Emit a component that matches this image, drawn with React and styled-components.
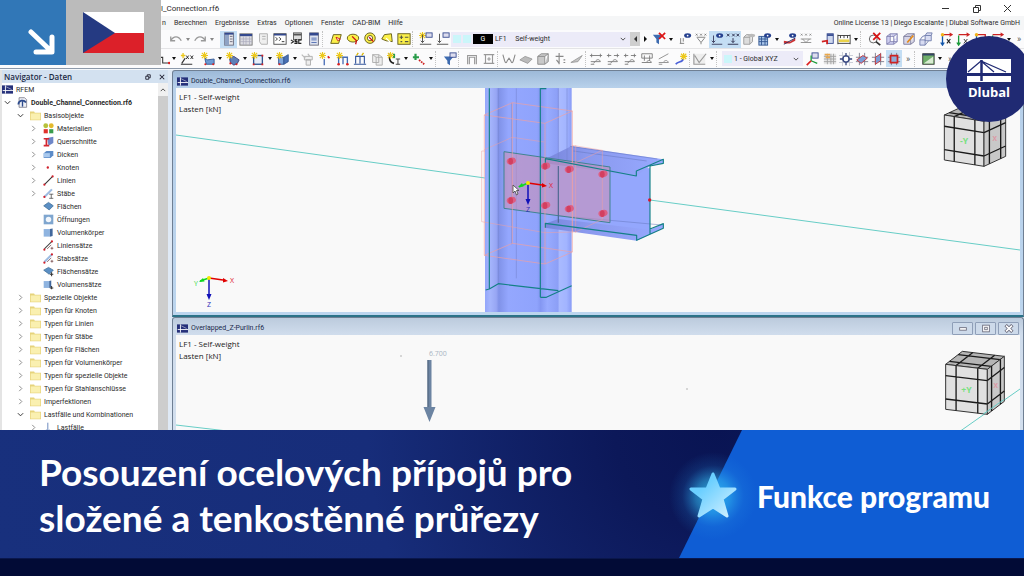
import React from 'react';
import styled, { createGlobalStyle } from 'styled-components';

const GlobalStyle = createGlobalStyle`
  * { box-sizing: border-box; }
  body { margin: 0; background: #020b36; }
  button, select { font: inherit; color: inherit; border: 0; padding: 0; margin: 0; background: none; }
`;

const Page = styled.div`
  position: relative;
  display: flex;
  flex-direction: column;
  height: 100vh;
  overflow: hidden;
  font-family: Roboto, 'Liberation Sans', sans-serif;
  font-size: 7px;
  color: #2b2b2b;
`;
const Program = styled.main`
  flex: 1;
  min-height: 0;
  display: flex;
  flex-direction: column;
  overflow: hidden;
  background: #fff;
`;

/* ---------- title bar and menu ---------- */
const TitleBar = styled.header`
  flex: none;
  display: flex;
  align-items: center;
  justify-content: space-between;
  height: 16px;
  padding: 0 12px 0 161px;
  font-size: 8px;
`;
const WindowButtons = styled.div`
  display: flex;
  gap: 22px;
`;
const WindowButton = styled.button`
  display: flex;
  svg { width: 9px; height: 9px; }
`;
const MenuBar = styled.nav`
  flex: none;
  display: flex;
  align-items: center;
  gap: 8px;
  height: 14px;
  padding: 0 4px 0 162px;
  background: #f5f6f7;
  white-space: nowrap;
`;
const MenuItem = styled.button`
  line-height: 14px;
`;
const License = styled.span`
  margin-left: auto;
`;

/* ---------- toolbars ---------- */
const Toolbar = styled.div`
  flex: none;
  display: flex;
  align-items: center;
  height: ${(p) => p.$height}px;
  padding-left: ${(p) => p.$start}px;
  background: #fbfbfc;
  border-bottom: 1px solid ${(p) => p.$line};
`;
const Tool = styled.button`
  flex: none;
  display: flex;
  align-items: center;
  justify-content: center;
  width: ${(p) => p.$w}px;
  height: 17px;
  background: ${(p) => (p.$on ? '#c4def4' : 'none')};
  svg { width: 14px; height: 14px; }
`;
const Caret = styled.button`
  flex: none;
  display: flex;
  justify-content: center;
  width: 8px;
  &::before {
    content: '';
    border: 2px solid transparent;
    border-top: 3px solid ${(p) => (p.$dim ? '#888' : '#111')};
    border-bottom: 0;
  }
`;
const Gap = styled.span`
  flex: none;
  width: ${(p) => p.$w}px;
  height: 16px;
  border-left: ${(p) => (p.$line ? '1px dotted #c3c3c3' : '0')};
`;
const More = styled.button`
  flex: none;
  width: 12px;
  color: #555;
  font-size: 9px;
`;
const Combo = styled.label`
  flex: none;
  display: flex;
  align-items: center;
  gap: 2px;
  width: ${(p) => p.$w}px;
  height: 15px;
  padding: 0 4px 0 2px;
  background: #ecebf8;
  select { flex: 1; min-width: 0; appearance: none; height: 14px; outline: 0; }
  svg { width: 6px; height: 6px; }
`;
const Swatch = styled.span`
  width: 8px;
  height: 8px;
  background: #cbf6fa;
`;
const CaseTag = styled.span`
  width: 20px;
  height: 10px;
  background: #000;
  color: #fff;
  text-align: center;
  line-height: 10px;
`;
const Step = styled.button`
  flex: none;
  width: 10px;
  height: 14px;
  background: ${(p) => (p.$dim ? '#cfcfcf' : 'none')};
  display: flex;
  align-items: center;
  justify-content: center;
  svg { width: 5px; height: 6px; }
`;

/* ---------- workspace ---------- */
const Workspace = styled.div`
  flex: 1;
  min-height: 0;
  display: flex;
  background: #dfe9f5;
  border-top: 1px solid #f4f8fc;
`;
const Navigator = styled.aside`
  flex: none;
  display: flex;
  flex-direction: column;
  width: 168px;
  margin-right: 4px;
  background: #fff;
  border-left: 2px solid #e4e4e4;
`;
const NavigatorHeader = styled.div`
  flex: none;
  display: flex;
  align-items: center;
  gap: 8px;
  height: 13px;
  padding: 0 3px 0 2px;
  background: #d3e1f0;
  svg { width: 6px; height: 6px; }
`;
const NavigatorTitle = styled.h2`
  flex: 1;
  margin: 0;
  font: 600 8px/12px 'Open Sans', sans-serif;
  color: #1d2b45;
`;
const NavigatorBody = styled.div`
  flex: 1;
  min-height: 0;
  display: flex;
`;
const Tree = styled.ul`
  flex: 1;
  margin: 0;
  padding: 0;
  overflow: hidden;
  list-style: none;
`;
const TreeRow = styled.li`
  display: flex;
  align-items: center;
  height: 13px;
  padding-left: ${(p) => [0, 2, 15, 28][p.$level]}px;
  font-weight: ${(p) => (p.$strong ? 700 : 400)};
  line-height: 8px;
  white-space: nowrap;
`;
const Toggle = styled.span`
  flex: none;
  display: flex;
  width: ${(p) => (p.$none ? 0 : 13)}px;
  svg { width: 7px; height: 7px; }
`;
const TreeIcon = styled.span`
  flex: none;
  display: flex;
  margin-right: 3px;
  svg { width: 11px; height: 11px; }
`;
const ScrollTrack = styled.div`
  width: 10px;
  background: #cdcdcd;
`;
const ScrollUp = styled.button`
  display: flex;
  align-items: center;
  justify-content: center;
  width: 10px;
  height: 13px;
  background: #f0f0f0;
  svg { width: 6px; height: 6px; }
`;

/* ---------- document windows ---------- */
const Documents = styled.section`
  flex: 1;
  min-width: 0;
  display: flex;
  flex-direction: column;
`;
const DocWindow = styled.article`
  flex: none;
  padding: 0 3px 3px;
  border: 1px solid #6f7f93;
  border-bottom: 2px solid #2c7388;
  border-radius: 3px 3px 0 0;
  background: ${(p) => (p.$active ? 'linear-gradient(#9db9d8, #b7d0ea 16px, #bcd5ee)' : 'linear-gradient(#bccbdd, #cfdcec 16px, #d6e2f0)')};
`;
const DocTitle = styled.header`
  display: flex;
  align-items: center;
  justify-content: space-between;
  height: 17px;
  padding: 3px 1px 0;
  color: #1a2a4a;
`;
const DocName = styled.span`
  display: flex;
  align-items: center;
  gap: 3px;
  svg { width: 11px; height: 9px; }
`;
const DocButtons = styled.div`
  display: flex;
  gap: 2px;
`;
const DocButton = styled.button`
  display: flex;
  align-items: center;
  justify-content: center;
  width: 21px;
  height: 13px;
  border: 1px solid #8f9fb8;
  border-radius: 1px;
  background: #cddaea;
  svg { width: 10px; height: 9px; }
`;
const Viewport = styled.div`
  display: grid;
  background: #f9f9f9;
  > * { grid-area: 1 / 1; }
`;
const Scene = styled.svg`
  display: block;
  width: 100%;
  height: 224px;
`;
const LoadCaption = styled.div`
  padding: 3px 3px;
  font: 8px/12px 'Open Sans', sans-serif;
  color: #222;
`;

/* ---------- overlays ---------- */
const LanguageBadge = styled.div`
  position: absolute;
  top: 0;
  left: 0;
  display: flex;
  height: 65px;
`;
const ArrowBox = styled.div`
  width: 66px;
  padding: 29px 11px 10px 28px;
  background: #3177b7;
`;
const FlagBox = styled.div`
  width: 95px;
  padding: 12px 17px;
  background: #bbbbbb;
  svg { display: block; width: 61px; height: 41px; }
`;
const Brand = styled.div`
  position: absolute;
  top: 36px;
  right: -8px;
  display: flex;
  flex-direction: column;
  align-items: center;
  width: 86px;
  height: 86px;
  padding-top: 23px;
  border-radius: 50%;
  background: #202a73;
  color: #fff;
  font: 700 13px/21px 'Open Sans', sans-serif;
  svg { width: 44px; height: 23px; }
`;

/* ---------- banner ---------- */
const Banner = styled.section`
  flex: none;
  display: flex;
  justify-content: space-between;
  height: 128px;
  background: radial-gradient(circle at 70% 0%, #091453 0, #0c1859 14%, #172d7a 48%, #18307d 100%);
  color: #fff;
`;
const Headline = styled.h1`
  margin: 0;
  padding: 19px 0 0 39px;
  font: 700 37px/46px Lato, sans-serif;
  white-space: nowrap;
`;
const Feature = styled.div`
  flex: none;
  position: relative;
  display: flex;
  align-items: center;
  gap: 20px;
  width: 345px;
  padding: 4px 0 0 10px;
  font: 900 30px/32px Lato, sans-serif;
  white-space: nowrap;
  &::before {
    content: '';
    position: absolute;
    inset: 0;
    background: #0f5dd4;
    clip-path: polygon(63px 0, 100% 0, 100% 100%, 0 100%);
  }
  svg { position: relative; flex: none; width: 48px; height: 48px; overflow: visible; }
  span { position: relative; }
`;
const BottomStrip = styled.footer`
  flex: none;
  height: 18px;
  background: #020b36;
  border-top: 1px solid #0a174c;
`;

/* ---------- small drawings ---------- */
const Svg = ({ children, box = '0 0 16 16', ...rest }) => (
  <svg viewBox={box} fill="none" aria-hidden="true" {...rest}>{children}</svg>
);
const Chevron = ({ dir = 'down' }) => (
  <Svg box="0 0 8 8">
    <path d={{ down: 'M1 2.5l3 3 3-3', right: 'M2.5 1l3 3-3 3', up: 'M1 5.5l3-3 3 3' }[dir]} stroke={dir === 'right' ? '#888' : '#333'} strokeWidth="1.1" />
  </Svg>
);

const eye = <g><ellipse cx="11" cy="4" rx="4" ry="2.6" fill="#25408f" /><circle cx="11" cy="4" r="1" fill="#fff" /></g>;
const spark = <path d="M4 0v8M0 4h8M1 1l6 6M7 1L1 7" stroke="#ecc81a" strokeWidth="1.3" />;
const lasso = { fill: '#fbf04a', stroke: '#5d5510' };

const ICONS = {
  undo: <path d="M2 5v5h5M2 10c3-6 9-6 12 0" stroke="#999" strokeWidth="1.5" />,
  redo: <path d="M14 5v5H9M14 10c-3-6-9-6-12 0" stroke="#999" strokeWidth="1.5" />,
  navigator: <><rect x="3" y="1" width="10" height="14" fill="#e6e6ea" stroke="#667" /><rect x="3" y="1" width="5" height="14" fill="#8fa3c4" /><path d="M3 2h10" stroke="#33488e" strokeWidth="2" /><path d="M9 5h3M9 8h3M9 11h3" stroke="#667" /></>,
  table: <><rect x="1" y="2" width="14" height="13" fill="#dcdce2" stroke="#777" /><path d="M1 3.500h14" stroke="#33488e" strokeWidth="2.500" /><path d="M1 8h14M1 11h14M5 5v10M8 5v10M12 5v10" stroke="#aab" strokeWidth=".8" /></>,
  sheet: <><path d="M4 2h9v12H6l-2-3z" fill="#efefef" stroke="#aaa" /><path d="M7 5h4M7 8h4" stroke="#aaa" /></>,
  console: <><rect x="1" y="2" width="14" height="12" fill="#fff" stroke="#444" /><path d="M1 3h14" stroke="#33488e" strokeWidth="2" /><path d="M3 6l2 2-2 2M7 6l2 2-2 2M10 11h3" stroke="#222" /></>,
  script: <><rect x="4" y="1" width="9" height="8" fill="#ddd" stroke="#555" /><path d="M4 3h9" stroke="#555" strokeWidth="2" /><path d="M1 9l3 2-3 2M8 9H6v2h2v2H5M13 9h-3v4h3" stroke="#222" strokeWidth="1.3" /></>,
  panel: <><rect x="3" y="1" width="10" height="14" fill="#dde2ef" stroke="#667" /><path d="M3 2.500h10" stroke="#33488e" strokeWidth="3" /><path d="M5 7h6M5 9h6M5 12h6" stroke="#4b68b0" /></>,
  selRect: <><path d="M5 3h9l-3 10H2z" {...lasso} /><path d="M8 6l5 2-3 2z" fill="#fff" stroke="#c11" /></>,
  selEllipse: <><ellipse cx="8" cy="7" rx="6.500" ry="4.500" {...lasso} /><path d="M7 5l5 5-1 4" stroke="#c11" strokeWidth="1.500" /></>,
  selRing: <><circle cx="8" cy="7" r="6" {...lasso} /><circle cx="8" cy="7" r="3" fill="#fff" stroke="#5d5510" /><path d="M7 6l5 5" stroke="#c11" strokeWidth="1.500" /></>,
  selPoly: <><path d="M2 8l3-5 8-1 1 9-7-1z" {...lasso} /><path d="M7 7l5 5-2 2" stroke="#fff" strokeWidth="1.500" /></>,
  selSpecial: <><rect x="1" y="2" width="14" height="12" {...lasso} /><path d="M3 6h4M5 4v4M9 6h4M4 11h2M9 11h4" stroke="#554" strokeWidth="1.300" /></>,
  loadNew: <>{spark}<rect x="8" y="1" width="7" height="5" fill="#dde" stroke="#33488e" /><path d="M4 3v9M2 10l2 2 2-2M1 14h13" stroke="#444" /></>,
  loadCase: <><rect x="8" y="1" width="7" height="5" fill="#dde" stroke="#33488e" /><path d="M4 2v10M2 10l2 2 2-2M1 14h13" stroke="#444" /></>,
  filterX: <><path d="M1 3h11L8 8v6l-3-2V8z" fill="#3d6bb0" /><path d="M8 1l7 7M15 1L8 8" stroke="#e01515" strokeWidth="2" /></>,
  filter: <><path d="M1 5h11L8 10v5l-3-2v-3z" fill="#3d6bb0" /><rect x="8" y="1" width="7" height="5" fill="#dde" stroke="#33488e" /></>,
  eyeSupport: <>{eye}<path d="M3 7v6M6 7v4M2 13h5" stroke="#777" /></>,
  values: <path d="M2 2l2 2M4 2L2 4M7 2l2 2M9 2L7 4M12 2l2 2M14 2l-2 2M3 6h10M4 7l4 5 4-5M8 12v2" stroke="#777" />,
  eyeLoad: <>{eye}<path d="M4 4v8M2 10l2 2 2-2M2 14h12" stroke="#335" /></>,
  xxx: <path d="M1 2l3 3M4 2L1 5M7 2l3 3M10 2L7 5M12 2l3 3M15 2l-3 3M8 7v5M6 10l2 2 2-2M2 14h12" stroke="#224" />,
  grayCube: <><path d="M2 6h7v8H2zM2 6l3-3h7l-3 3M12 3v8l-3 3" fill="#ddd" stroke="#999" /><ellipse cx="11" cy="4" rx="4" ry="2" fill="#bbb" /></>,
  eyeGrid: <><rect x="1" y="5" width="10" height="10" fill="#a8c4e8" stroke="#315590" /><path d="M1 8h10M1 11h10M4 5v10M8 5v10" stroke="#315590" />{eye}</>,
  eyeResult: <>{eye}<path d="M1 13v-3l7 1 6-4v3l-6 3z" fill="#c33" /><path d="M1 14L14 7" stroke="#225" /></>,
  grayXxx: <path d="M2 2l2 2M4 2L2 4M7 2l2 2M9 2L7 4M12 2l2 2M14 2l-2 2M2 8h12M2 12h12M4 8l4 4 4-4" stroke="#888" />,
  resultPanel: <><rect x="7" y="2" width="7" height="11" fill="#cfd8ee" stroke="#33488e" /><path d="M7 3.500h7" stroke="#33488e" strokeWidth="2" /><path d="M1 11l6-1v4" stroke="#d02020" strokeWidth="2" /></>,
  scale: <><path d="M1 4h14M1 13h14M1 3v11M15 3v11M4 4v3M8 4v3M12 4v3" stroke="#333" /><path d="M2 10h12" stroke="#ead24a" strokeWidth="3" /></>,
  zoomX: <><circle cx="6" cy="8" r="4.500" stroke="#555" /><path d="M9 11l5 4" stroke="#333" strokeWidth="2" /><path d="M6 1l8 8M14 1L6 9" stroke="#d81515" strokeWidth="2" /></>,
  cube: <path d="M2 5h8v9H2zM2 5l4-3h8l-4 3M14 2v9l-4 3M6 2v9h8M6 11l-4 3" fill="#cfcff0" stroke="#7676a8" strokeWidth=".9" />,
  cubeEdit: <><path d="M2 5h8v9H2zM2 5l4-3h8l-4 3M14 2v9l-4 3" fill="#d8d6e8" stroke="#777798" /><path d="M6 12l7-8" stroke="#e28a1c" strokeWidth="2" /></>,
  cubes: <path d="M1 9h6v6H1zM7 4h7v6H7zM1 9l3-4 3-1M14 4l1-3H9L7 4M7 15l4-5" fill="#d8dcf2" stroke="#6f7bab" />,
  axisX: <><path d="M4 3h10M12 1l3 2-3 2" stroke="#c22" strokeWidth="1.300" /><path d="M4 4v10M2 12l2 3 2-3" stroke="#15a" strokeWidth="1.500" /><circle cx="4" cy="3" r="2" fill="#f2b31a" /><path d="M9 8l4 5M13 8l-4 5" stroke="#222" strokeWidth="1.300" /></>,
  axisY: <><path d="M3 3h11M12 1l3 2-3 2" stroke="#c22" strokeWidth="1.300" /><path d="M3 4v10M1 12l2 3 2-3" stroke="#1a9a3a" strokeWidth="1.500" /><path d="M9 8l4 5M13 8l-4 5" stroke="#222" /></>,
  axisZ: <><path d="M3 3h11v5" stroke="#c22" strokeWidth="1.500" /><path d="M4 4v10" stroke="#15a" strokeWidth="1.500" /><circle cx="4" cy="3" r="2" fill="#f2b31a" /></>,
  line: <><path d="M1 6h6v7h8" stroke="#333" strokeWidth="1.300" /><circle cx="15" cy="13" r="1.500" fill="#d22" /></>,
  memberXx: <><path d="M1 14h13M2 13l4-6" stroke="#333" strokeWidth="1.300" /><path d="M7 4l3 4M10 4L7 8M12 4l3 4M15 4l-3 4" stroke="#222" /><path d="M1 4h5M3.500 1v6" stroke="#ecc81a" strokeWidth="1.500" /></>,
  surface: <><path d="M4 6l3 3 8-1v6H6z" fill="#6d9bd4" stroke="#315590" />{spark}<circle cx="5" cy="14" r="1.200" fill="#d22" /><circle cx="14" cy="14" r="1.200" fill="#d22" /></>,
  solid: <><path d="M4 7l5-2 6 4-2 4-4 2-4-3z" fill="#5f7fb8" stroke="#3a3f77" />{spark}<circle cx="5" cy="13" r="1.200" fill="#d22" /><circle cx="12" cy="14" r="1.200" fill="#d22" /></>,
  opening: <><rect x="3" y="4" width="10" height="10" fill="#e8effa" stroke="#315590" strokeWidth="1.500" />{spark}<path d="M2 13h2v2H2zM12 13h2v2h-2zM12 3h2v2h-2z" fill="#d22" /></>,
  volume: <><path d="M3 6h6v8H3z" fill="#7fa6dc" stroke="#315590" /><path d="M9 6l5-3v8l-5 3z" fill="#4a71b4" stroke="#315590" />{spark}<circle cx="4" cy="14" r="1.200" fill="#d22" /></>,
  gray: <><path d="M5 5h9v4H5zM7 9h5v6H7z" fill="#eee" stroke="#aaa" /><path d="M2 3l4 4M9 2l2 3" stroke="#bbb" strokeWidth="1.500" /></>,
  node: <>{spark}<path d="M6 8v7" stroke="#456bb5" strokeWidth="1.500" /><path d="M10 5l2 2" stroke="#d22" strokeWidth="2" /></>,
  frame: <><path d="M3 14V6h10v8M8 6v8" stroke="#456bb5" strokeWidth="1.500" />{spark}<circle cx="3" cy="14" r="1.500" fill="#d22" /><circle cx="13" cy="14" r="1.500" fill="#d22" /></>,
  frame2: <><path d="M3 13V5h10v8M8 5v8M1 14h14" stroke="#35579c" strokeWidth="1.300" /><path d="M4 4l2-3M10 4l2-3" stroke="#d8b400" strokeWidth="1.500" /></>,
  grayFrame: <path d="M3 3h7v9H3zM7 6h7v9H7zM3 3l4 3M10 3l4 3" fill="#eee" stroke="#aaa" />,
  supports: <><path d="M3 2v5c0 3 2 5 5 6" stroke="#222" strokeWidth="2" /><path d="M8 2v5" stroke="#2a9c4a" strokeWidth="2.500" /><path d="M10 8h5M12.500 8v6M10 14h5" stroke="#333" />{spark}</>,
  hinge: <><path d="M4 2v7M1 6h7" stroke="#2a9c4a" strokeWidth="2.500" /><path d="M8 9l6 5" stroke="#c22" strokeWidth="2" strokeDasharray="2 1" /></>,
  arch: <path d="M3 14V4h10v10M5 14V6h6v8" stroke="#999" strokeWidth="1.300" />,
  beam: <path d="M2 3h12M2 13h12M4 3v10M12 3v10M6 8h4M8 6v4" stroke="#999" strokeWidth="1.300" />,
  moment: <path d="M1 3l2 7c1 3 2 3 3 0l2-3 2 3c1 3 2 3 3 0l2-7" stroke="#888" strokeWidth="1.200" />,
  slab: <path d="M1 9l6-4 8 3-5 5z" fill="#bbb" stroke="#999" />,
  box: <path d="M2 5h8v9H2zM2 5l4-3h8l-4 3M14 2v9l-4 3" fill="#c9c9c9" stroke="#888" />,
  react: <path d="M7 1v13M3 5h9M4 9l3 4M12 9h2M12 12h2" stroke="#888" strokeWidth="1.300" />,
  wedge: <path d="M1 12L14 4 9 11z" fill="#c5c5c5" stroke="#999" />,
  dim: <path d="M1 4h14M3 2v4M13 2v4M2 11h5c2-3 5-3 6 0H7l-2 2M2 14h4" stroke="#777" />,
  dim2: <path d="M1 4h5M9 4h6M3 2v4M13 2v4M2 11h5c2-3 5-3 6 0H7l-2 2M2 14h4" stroke="#777" />,
  dimBox: <path d="M2 2h12v5H2zM5 4v6M11 4v6M2 12h5c2-3 5-3 6 0H7" stroke="#777" />,
  dimTilt: <path d="M2 8L13 2M2 12h5c2-3 5-3 6 0H7M2 14h4" stroke="#888" />,
  wand: <><path d="M2 14c3-4 6-1 9-6" stroke="#4a60d8" strokeWidth="2" /><path d="M11 1v8M7 5h8M8 2l6 6M14 2L8 8" stroke="#ecc81a" strokeWidth="1.300" /></>,
  grayChart: <><rect x="1" y="2" width="13" height="12" fill="#eee" /><path d="M1 2v12h13M2 4l5 8 8-10" stroke="#999" strokeWidth="1.300" /></>,
  csys: <><rect x="8" y="1" width="7" height="6" fill="#dde" stroke="#33488e" /><path d="M7 10V4M7 10l7 3" stroke="#1c9c3a" strokeWidth="1.500" /><path d="M7 10l-5 5" stroke="#d22" strokeWidth="2" /></>,
  gridPlane: <><rect x="1" y="2" width="14" height="12" fill="#e6e6e6" /><path d="M1 5h14M1 8h14M1 11h14M5 2v12M9 2v12M12 2v12" stroke="#a2a2a2" /><path d="M2 3h6M3 6h5" stroke="#eba84a" strokeWidth="2" /></>,
  snap: <><path d="M0 4h16M0 12h16M4 0v16M12 0v16" stroke="#c5c8d2" /><circle cx="8" cy="8" r="3.500" fill="#fff" stroke="#35457f" strokeWidth="1.500" /><path d="M8 1v4M8 11v4M1 8h4M11 8h4" stroke="#35457f" strokeWidth="1.500" /></>,
  planeA: <><path d="M1 6h14M1 11h14M5 1v14M11 1v14" stroke="#778" /><path d="M2 9l7-5 5 3-7 6z" fill="#7a9cd6" stroke="#c33" /></>,
  planeB: <><path d="M1 6h14M1 11h14M5 1v14M11 1v14" stroke="#778" /><path d="M5 6l6-4v8l-6 4z" fill="#7a9cd6" stroke="#c33" /></>,
  planeC: <><path d="M1 6h14M1 11h14M5 1v14M11 1v14" stroke="#778" /><path d="M4 4h8v8H4z" fill="#8facd8" stroke="#c22" strokeWidth="2" /></>,
  map: <><rect x="2" y="2" width="13" height="12" fill="#6fae6a" stroke="#333" /><path d="M3 13L14 5v8z" fill="#d9ecd2" /><path d="M2 3h13" stroke="#346" strokeWidth="2" /></>,
};

const TREE_ICONS = {
  rfem: <><rect y="2" width="16" height="12" fill="#25307a" /><path d="M1 9.500h15M5 2v12" stroke="#fff" strokeWidth="1.300" /><path d="M6 4l8 4" stroke="#fff" strokeWidth=".7" /></>,
  file: <><path d="M3 1h8l3 3v11H3z" fill="#eef1f6" stroke="#667" /><path d="M2 11c0-6 8-8 11-3" stroke="#2c4a8c" strokeWidth="2.500" /><path d="M8 6v8" stroke="#2c4a8c" strokeWidth="2" /></>,
  folder: <><path d="M0 2h6l1 2h9v11H0z" fill="#e6d37c" /><path d="M1 5h14v9H1z" fill="#faf0b0" /></>,
  material: <><circle cx="4" cy="4" r="3.500" fill="#b6c13a" /><circle cx="12" cy="4" r="3.500" fill="#e3b92c" /><rect x="1" y="9" width="6" height="6" fill="#e0322c" /><rect x="9" y="9" width="6" height="6" fill="#3a9c4c" /></>,
  section: <><path d="M6 3l9-2v9l-7 4z" fill="#6e86c8" /><path d="M1 4h8M5 4v9M1 14h8" stroke="#d32630" strokeWidth="2.500" /></>,
  thickness: <><path d="M1 6l4-3h10v6l-4 4H1z" fill="#5d8cc8" /><path d="M1 6h9v6H1z" fill="#a9c9ee" /></>,
  node: <circle cx="7" cy="8" r="1.700" fill="#d0202c" />,
  line: <><path d="M2 14L14 2" stroke="#333" strokeWidth="1.500" /><circle cx="2" cy="14" r="1.600" fill="#d0202c" /><circle cx="14" cy="2" r="1.600" fill="#d0202c" /></>,
  member: <><path d="M2 13L13 2" stroke="#9dbbe2" strokeWidth="3" /><circle cx="2" cy="13" r="1.600" fill="#d0202c" /><path d="M9 9h6M12 9v6M9 15h6" stroke="#333" /></>,
  surface: <path d="M1 7l7-5 7 5-6 6z" fill="#5b8fc4" stroke="#386892" />,
  opening: <><rect x="1" y="1" width="14" height="14" fill="#7fa6cf" /><circle cx="8" cy="8" r="4" fill="#f1f6fc" /></>,
  solid: <><path d="M1 3h9v11H1z" fill="#8fb4e0" /><path d="M10 3l4-1v11l-4 1z" fill="#41679c" /></>,
  lineSet: <><path d="M2 13L13 2" stroke="#444" strokeWidth="1.500" /><circle cx="2" cy="14" r="1.600" fill="#d0202c" /><circle cx="13" cy="2" r="1.600" fill="#d0202c" /><path d="M6 13l6-6M11 12h4M13 10v4" stroke="#633" /></>,
  memberSet: <><path d="M2 13L13 2" stroke="#9dbbe2" strokeWidth="3" /><circle cx="2" cy="14" r="1.600" fill="#d0202c" /><circle cx="13" cy="2" r="1.600" fill="#d0202c" /><path d="M6 13l6-6M11 12h4M13 10v4" stroke="#633" /></>,
  surfaceSet: <><path d="M1 6l7-4 7 4-6 6z" fill="#5b8fc4" stroke="#386892" /><path d="M10 12h5M12.500 9v6" stroke="#333" strokeWidth="1.500" /></>,
  solidSet: <><path d="M1 3h8v10H1z" fill="#8fb4e0" /><path d="M9 3l3-1v10l-3 1z" fill="#41679c" /><path d="M10 13h5M12.500 10v5" stroke="#333" strokeWidth="1.500" /></>,
  load: <path d="M7 1v13M5 11l2 3 2-3" stroke="#5c7db8" strokeWidth="1.300" />,
};

/* Each entry: [icon, width, highlighted]; 'v' is a drop-down arrow, '|' a divider, '_' a space. */
const ROW_ONE_LEFT = [['undo', 16], ['v', 1], ['redo', 16], ['v', 1], ['_', 4], ['navigator', 17, true], ['table', 17], ['sheet', 17], ['console', 17], ['script', 17], ['panel', 17], ['|', 5], ['selRect', 17], ['selEllipse', 17], ['selRing', 17], ['selPoly', 17], ['selSpecial', 17], ['|', 5], ['loadNew', 17], ['loadCase', 17]];
const ROW_ONE_RIGHT = [['filterX', 17], ['v'], ['_', 2], ['eyeSupport', 16], ['values', 16], ['eyeLoad', 16, true], ['xxx', 16, true], ['grayCube', 16], ['eyeGrid', 16], ['v'], ['_', 1], ['eyeResult', 16], ['grayXxx', 16], ['_', 6], ['resultPanel', 16], ['scale', 16], ['v'], ['|', 6], ['zoomX', 17], ['cube', 17], ['cubeEdit', 17], ['cubes', 17], ['_', 3], ['axisX', 17], ['axisY', 17], ['axisZ', 17], ['axisY', 17], ['v']];
const ROW_TWO_LEFT = [['line', 13], ['v'], ['memberXx', 17], ['_', 4], ['surface', 17], ['v'], ['solid', 17], ['v'], ['opening', 17], ['v'], ['volume', 17], ['v'], ['gray', 16], ['_', 2], ['node', 17], ['frame', 17], ['frame2', 17], ['grayFrame', 17], ['supports', 17], ['v'], ['hinge', 17], ['v'], ['|', 6], ['filter', 17], ['|', 5], ['arch', 17], ['beam', 17], ['|', 3], ['moment', 17], ['slab', 17], ['box', 17], ['react', 17], ['wedge', 17], ['|', 2], ['dim', 17], ['dim2', 17], ['dim2', 17], ['dimBox', 17], ['dimTilt', 17], ['wand', 17], ['|', 2], ['grayChart', 17], ['v'], ['|', 6]];
const ROW_TWO_RIGHT = [['csys', 17], ['_', 2], ['gridPlane', 16], ['snap', 16], ['planeA', 16], ['planeB', 16], ['planeC', 16, true]];

const Tools = ({ items }) => items.map(([name, w, on], i) => {
  if (name === 'v') return <Caret key={i} $dim={w === 1} aria-label="Mehr" />;
  if (name === '|' || name === '_') return <Gap key={i} $w={w} $line={name === '|'} />;
  return <Tool key={i} $w={w} $on={on} aria-label={name}><Svg>{ICONS[name]}</Svg></Tool>;
});

const TREE = [
  [0, '', 'rfem', 'RFEM'],
  [1, 'down', 'file', 'Double_Channel_Connection.rf6'],
  [2, 'down', 'folder', 'Basisobjekte'],
  [3, 'right', 'material', 'Materialien'],
  [3, 'right', 'section', 'Querschnitte'],
  [3, 'right', 'thickness', 'Dicken'],
  [3, 'right', 'node', 'Knoten'],
  [3, 'right', 'line', 'Linien'],
  [3, 'right', 'member', 'Stäbe'],
  [3, 'none', 'surface', 'Flächen'],
  [3, 'none', 'opening', 'Öffnungen'],
  [3, 'none', 'solid', 'Volumenkörper'],
  [3, 'none', 'lineSet', 'Liniensätze'],
  [3, 'none', 'memberSet', 'Stabsätze'],
  [3, 'none', 'surfaceSet', 'Flächensätze'],
  [3, 'none', 'solidSet', 'Volumensätze'],
  [2, 'right', 'folder', 'Spezielle Objekte'],
  [2, 'right', 'folder', 'Typen für Knoten'],
  [2, 'right', 'folder', 'Typen für Linien'],
  [2, 'right', 'folder', 'Typen für Stäbe'],
  [2, 'right', 'folder', 'Typen für Flächen'],
  [2, 'right', 'folder', 'Typen für Volumenkörper'],
  [2, 'right', 'folder', 'Typen für spezielle Objekte'],
  [2, 'right', 'folder', 'Typen für Stahlanschlüsse'],
  [2, 'right', 'folder', 'Imperfektionen'],
  [2, 'down', 'folder', 'Lastfälle und Kombinationen'],
  [3, 'right', 'load', 'Lastfälle'],
];

/* Orientation cube: front, side and top faces, each split at 1/4 and 3/4. */
const mix = (a, b, t) => [a[0] + (b[0] - a[0]) * t, a[1] + (b[1] - a[1]) * t];
function Face({ pts, fill }) {
  const [a, b, c, d] = pts;
  return (
    <g>
      <polygon points={pts.join(' ')} fill={fill} stroke="#333" strokeWidth="3" />
      {[0.25, 0.77].map((t) => (
        <path key={t} d={`M${mix(a, b, t)}L${mix(d, c, t)}M${mix(a, d, t)}L${mix(b, c, t)}`} stroke="#1a1a1a" strokeWidth="4" />
      ))}
    </g>
  );
}
function Cube({ fl, fr, br, bl, h, label }) {
  const down = ([x, y]) => [x, y + h];
  const cx = (fl[0] + fr[0]) / 2;
  const cy = (fl[1] + fr[1]) / 2 + h / 2;
  return (
    <g fontFamily="Open Sans" fontWeight="700">
      <Face pts={[bl, br, fr, fl]} fill="#b5b5b5" />
      <Face pts={[fl, fr, down(fr), down(fl)]} fill="#e0e0e0" />
      <Face pts={[fr, br, down(br), down(fr)]} fill="#c8c8c8" />
      <text x={cx} y={cy + 10} fontSize="26" textAnchor="middle" fill="#79e080">{label}</text>
      <text x={(fr[0] + br[0]) / 2} y={(fr[1] + br[1]) / 2 + h / 2 + 8} fontSize="20" textAnchor="middle" fill="#dd98a4">X</text>
    </g>
  );
}

function Axes({ x, y, yTip, yLabel }) {
  return (
    <g transform={`translate(${x} ${y})`} fontFamily="Open Sans" fontSize="7">
      <path d="M0 0L14 2" stroke="#e00000" strokeWidth="1.500" />
      <path d="M14 0l5 3-5 1.500z" fill="#e00000" />
      <path d="M0 0v17" stroke="#1010b8" strokeWidth="1.500" />
      <path d="M-2.500 16h5L0 22z" fill="#1010b8" />
      <path d={`M0 0L${yTip}`} stroke="#10d820" strokeWidth="1.500" />
      <path d="M-10 4l4-4 1.500 3.500z" fill="#10d820" />
      <circle r="2" fill="#f4e800" />
      <text x="21" y="5" fill="#e02030">X</text>
      <text x="-2" y="29" fill="#3030b8">Z</text>
      {yLabel && <text x="-15" y="8" fill="#30d840">Y</text>}
    </g>
  );
}

const BOLTS = [[124, 240], [227, 255], [298, 265], [399, 279], [124, 358], [227, 373], [298, 383], [399, 397]];

function Connection() {
  return (
    <g transform="translate(470 80) scale(.33333)" strokeLinejoin="round">
      <defs>
        <linearGradient id="column" x1="45" x2="305" y1="0" y2="0" gradientUnits="userSpaceOnUse">
          <stop offset="0" stopColor="#93a6fb" />
          <stop offset=".06" stopColor="#a5b5fc" />
          <stop offset=".13" stopColor="#97a6f4" />
          <stop offset=".16" stopColor="#8092e8" />
          <stop offset=".27" stopColor="#94a7fe" />
          <stop offset=".6" stopColor="#8fa3fc" />
          <stop offset=".64" stopColor="#8497f2" />
          <stop offset=".72" stopColor="#98abff" />
          <stop offset=".84" stopColor="#8c9ff6" />
          <stop offset=".86" stopColor="#a9baff" />
          <stop offset=".94" stopColor="#a2b4ff" />
          <stop offset="1" stopColor="#899cf6" />
        </linearGradient>
        <linearGradient id="flange" x1="0" x2="1" y1="0" y2="0">
          <stop offset="0" stopColor="#7886dc" />
          <stop offset=".35" stopColor="#8a99ee" />
          <stop offset="1" stopColor="#97a9ff" />
        </linearGradient>
      </defs>
      <path d="M45 21h260v672H45z" fill="url(#column)" />
      <path d="M265 240L540 262v198l-275-35z" fill="#94a7fd" />
      <path d="M225 235L305 195 580 235v12l-40 8-40 30-275-38z" fill="url(#flange)" />
      <path d="M225 428l40-14 275 32 40-18v14l-80 37-275-39z" fill="url(#flange)" />
      <path d="M85 22v586M125 65v425M139 22v570M265 22v230M291 22v220" stroke="#7180c8" strokeWidth="1.500" />
      <path d="M300 196l262 38M310 210l220 30M265 404l310 28" stroke="#6475bd" strokeWidth="1.500" />
      <path d="M102 212L420 258v167L102 382z" fill="#d08fb0" fillOpacity=".55" stroke="#3f8490" strokeWidth="3" />
      <g stroke="#f0a0a0" strokeWidth="2">
        <path d="M43 102L127 65l180 25-82 37zM43 523l84-36 180 26-82 36zM43 102v421M307 90v423M225 127v422M127 65v422" />
        <path d="M35 210v212l190 33 92-2 80-38V208l-90-15v260M317 193v262M43 206l84-37 95 14M35 210h10M317 245l80-37" strokeOpacity=".75" />
      </g>
      <g stroke="#148087" strokeWidth="3.500">
        <path d="M58 22v602M211 22v627M211 23h18M47 627l11-3 27-16 180 21M211 649h18l76-35" />
        <path d="M265 255v170" stroke="#4c6890" />
        <path d="M226 248v-15l273 52v-15l81-35v12l-40 8v204M226 440v-13l274 36v15l80-36v-14l-40 16" />
      </g>
      {BOLTS.map(([x, y]) => (
        <g key={`${x}-${y}`}>
          <ellipse cx={x} cy={y} rx="14" ry="10" fill="#dc5f84" transform={`rotate(-15 ${x} ${y})`} />
          <ellipse cx={x - 2} cy={y + 1} rx="7" ry="10" fill="#d23f60" />
        </g>
      ))}
      <circle cx="539" cy="357" r="5" fill="#d8142a" />
    </g>
  );
}

function ConnectionScene() {
  return (
    <Scene viewBox="176 87 844 224" fill="none" role="img" aria-label="Double_Channel_Connection">
      <path d="M176 134L485 177M650 199l370 50" stroke="#67cdc6" />
      <Connection />
      <Axes x="528" y="182" yTip="-9 4" />
      <Axes x="209" y="277" yTip="-9 3" yLabel />
      <path d="M513 184v8l2-2 1.500 4 1.500-1-1.500-3.500h2.500z" fill="#fff" stroke="#444" strokeWidth=".8" />
      <g transform="translate(680 100) scale(.33333)">
        <Cube fl={[793, 42]} fr={[912, 61]} br={[977, 31]} bl={[858, 12]} h={135} label="-Y" />
      </g>
    </Scene>
  );
}

function PurlinScene() {
  return (
    <Scene viewBox="176 333 844 224" fill="none" role="img" aria-label="Overlapped_Z-Purlin">
      <path d="M176 423l60 7 60 8M959 430l61-43" stroke="#67cdc6" />
      <path d="M427.500 358h4v47h4l-6 15-6-15h4z" fill="#6c84a2" />
      <path d="M428 358v47" stroke="#4c6078" />
      <text x="429" y="354" fontSize="7" fontFamily="Open Sans" fill="#a8b4c2">6.700</text>
      <circle cx="401" cy="354" r=".7" fill="#999" />
      <circle cx="687" cy="387" r=".7" fill="#999" />
      <g transform="translate(680 310) scale(.33333)">
        <Cube fl={[797, 157]} fr={[922, 172]} br={[973, 133]} bl={[847, 118]} h={135} label="+Y" />
        <path d="M910 306l63-44" stroke="#67cdc6" strokeWidth="3" />
      </g>
    </Scene>
  );
}

const Document = ({ name, active, controls, children }) => (
  <DocWindow $active={active}>
    <DocTitle>
      <DocName><Svg box="0 2 16 12">{TREE_ICONS.rfem}</Svg>{name}</DocName>
      {controls && (
        <DocButtons>
          <DocButton aria-label="Minimieren"><Svg box="0 0 12 10"><rect x="2" y="4" width="8" height="3" fill="#fff" stroke="#667" /></Svg></DocButton>
          <DocButton aria-label="Maximieren"><Svg box="0 0 12 10"><rect x="2" y="1" width="8" height="8" fill="#fff" stroke="#667" /><rect x="4.500" y="3.500" width="3" height="3" stroke="#667" /></Svg></DocButton>
          <DocButton aria-label="Schließen"><Svg box="0 0 12 10"><path d="M2 1l8 8M10 1L2 9" stroke="#667" strokeWidth="4" /><path d="M2.500 1.500l7 7M9.500 1.500l-7 7" stroke="#fff" strokeWidth="2" /></Svg></DocButton>
        </DocButtons>
      )}
    </DocTitle>
    <Viewport>
      {children}
      <LoadCaption>LF1 - Self-weight<br />Lasten [kN]</LoadCaption>
    </Viewport>
  </DocWindow>
);

const MENU = ['n', 'Berechnen', 'Ergebnisse', 'Extras', 'Optionen', 'Fenster', 'CAD-BIM', 'Hilfe'];

export default function App() {
  return (
    <Page>
      <GlobalStyle />
      <Program>
        <TitleBar>
          <span>l_Connection.rf6</span>
          <WindowButtons>
            <WindowButton aria-label="Minimieren"><Svg box="0 0 9 9"><path d="M1 4.500h7" stroke="#333" /></Svg></WindowButton>
            <WindowButton aria-label="Wiederherstellen"><Svg box="0 0 9 9"><path d="M1.500 3.500h5v5h-5zM3.500 3.500v-2h5v5h-2" stroke="#333" /></Svg></WindowButton>
            <WindowButton aria-label="Schließen"><Svg box="0 0 9 9"><path d="M1 1l7 7M8 1L1 8" stroke="#333" /></Svg></WindowButton>
          </WindowButtons>
        </TitleBar>
        <MenuBar>
          {MENU.map((m) => <MenuItem key={m}>{m}</MenuItem>)}
          <License>Online License 13 | Diego Escalante | Dlubal Software GmbH</License>
        </MenuBar>
        <Toolbar $height={19} $start={168} $line="#e4e4e6">
          <Tools items={ROW_ONE_LEFT} />
          <Combo $w={179}>
            <Swatch /><Swatch /><CaseTag>G</CaseTag>
            <select aria-label="Lastfall"><option>{'LF1\u00a0\u00a0\u00a0\u00a0\u00a0Self-weight'}</option></select>
            <Chevron />
          </Combo>
          <Step $dim aria-label="Zurück"><Svg box="0 0 5 6"><path d="M4 0v6L1 3z" fill="#333" /></Svg></Step>
          <Step aria-label="Weiter"><Svg box="0 0 5 6"><path d="M1 0v6l3-3z" fill="#111" /></Svg></Step>
          <Tools items={ROW_ONE_RIGHT} />
          <More aria-label="Mehr">»</More>
        </Toolbar>
        <Toolbar $height={20} $start={157} $line="#8c99aa">
          <Tools items={ROW_TWO_LEFT} />
          <Combo $w={81}>
            <Swatch />
            <select aria-label="Koordinatensystem"><option>1 - Global XYZ</option></select>
            <Chevron />
          </Combo>
          <Tools items={ROW_TWO_RIGHT} />
          <More aria-label="Mehr">»</More>
          <Tools items={[['|', 5], ['map', 17], ['v']]} />
          <More aria-label="Mehr">»</More>
        </Toolbar>

        <Workspace>
          <Navigator>
            <NavigatorHeader>
              <NavigatorTitle>Navigator - Daten</NavigatorTitle>
              <Svg box="0 0 8 8"><path d="M1 3h4v4H1zM3 3V1h4v4H5" stroke="#223" strokeWidth="1.200" /></Svg>
              <Svg box="0 0 8 8"><path d="M1 1l6 6M7 1L1 7" stroke="#223" strokeWidth="1.400" /></Svg>
            </NavigatorHeader>
            <NavigatorBody>
              <Tree>
                {TREE.map(([level, toggle, icon, text]) => (
                  <TreeRow key={text} $level={level} $strong={icon === 'file'}>
                    <Toggle $none={!toggle}>{(toggle === 'down' || toggle === 'right') && <Chevron dir={toggle} />}</Toggle>
                    <TreeIcon><Svg>{TREE_ICONS[icon]}</Svg></TreeIcon>
                    {text}
                  </TreeRow>
                ))}
              </Tree>
              <ScrollTrack><ScrollUp aria-label="Nach oben"><Chevron dir="up" /></ScrollUp></ScrollTrack>
            </NavigatorBody>
          </Navigator>
          <Documents>
            <Document name="Double_Channel_Connection.rf6" active><ConnectionScene /></Document>
            <Document name="Overlapped_Z-Purlin.rf6" controls><PurlinScene /></Document>
          </Documents>
        </Workspace>
      </Program>

      <Banner>
        <Headline>Posouzení ocelových přípojů pro<br />složené a tenkostěnné průřezy</Headline>
        <Feature>
          <svg viewBox="0 0 48 48" aria-hidden="true">
            <defs>
              <radialGradient id="glow">
                <stop offset="0" stopColor="#35c4f5" stopOpacity=".9" />
                <stop offset=".4" stopColor="#30b5f0" stopOpacity=".55" />
                <stop offset=".7" stopColor="#2898e8" stopOpacity=".15" />
                <stop offset="1" stopColor="#2090e8" stopOpacity="0" />
              </radialGradient>
              <linearGradient id="star" x1="0" y1="0" x2="1" y2="1">
                <stop offset=".3" stopColor="#6bcfff" />
                <stop offset="1" stopColor="#d6f1ff" />
              </linearGradient>
            </defs>
            <circle cx="24" cy="24" r="44" fill="url(#glow)" />
            <path d="M24 2l6 15h16L33 27l5 17-14-9-14 9 5-17L2 17h16z" fill="url(#star)" stroke="url(#star)" strokeWidth="3" strokeLinejoin="round" />
          </svg>
          <span>Funkce programu</span>
        </Feature>
      </Banner>
      <BottomStrip />

      <LanguageBadge>
        <ArrowBox>
          <svg width="27" height="26" viewBox="0 0 27 26" fill="none" stroke="#fff" strokeWidth="5" strokeLinecap="round" strokeLinejoin="round" aria-hidden="true">
            <path d="M3 3l20 19M24 8v15H8" />
          </svg>
        </ArrowBox>
        <FlagBox>
          <svg viewBox="0 0 61 41" role="img" aria-label="Čeština">
            <path fill="#fff" d="M0 0h61v21H0z" />
            <path fill="#dc2029" d="M0 21h61v20H0z" />
            <path fill="#253a82" d="M0 0l32 21L0 41z" />
          </svg>
        </FlagBox>
      </LanguageBadge>
      <Brand>
        <svg viewBox="0 0 44 23" fill="none" aria-hidden="true">
          <path fill="#fff" d="M0 0h44v14H0zM0 17h44v6H0z" />
          <path d="M1 13L14 2l25 11M14 2l13 11" stroke="#202a73" strokeWidth="1.200" />
          <path d="M14.500 1v21" stroke="#202a73" strokeWidth="2.500" />
        </svg>
        Dlubal
      </Brand>
    </Page>
  );
}
